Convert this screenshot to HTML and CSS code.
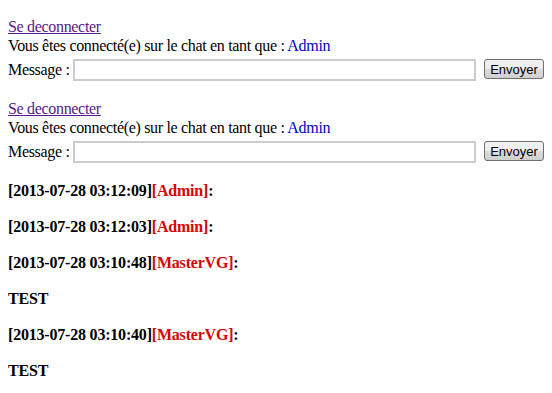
FILE: index.html
```html
<!DOCTYPE html>
<html lang="fr">
<head>
  <meta charset="UTF-8" />
  <title>Chat</title>
  <link rel="stylesheet" href="styles.css">
</head>
<body>

  <div class="session">
    <a href="#" class="logout">Se deconnecter</a>
    <div class="line">Vous êtes connecté(e) sur le chat en tant que : <span class="user">Admin</span></div>
    <form class="send" onsubmit="return false;">
      <label for="msg1">Message :</label>
      <input type="text" id="msg1" class="field">
      <button type="submit" class="btn">Envoyer</button>
    </form>
  </div>

  <div class="session">
    <a href="#" class="logout">Se deconnecter</a>
    <div class="line">Vous êtes connecté(e) sur le chat en tant que : <span class="user">Admin</span></div>
    <form class="send" onsubmit="return false;">
      <label for="msg2">Message :</label>
      <input type="text" id="msg2" class="field">
      <button type="submit" class="btn">Envoyer</button>
    </form>
  </div>

  <div class="messages">
    <p class="msg">[2013-07-28 03:12:09]<span class="nick">[Admin]</span>:</p>
    <p class="msg">[2013-07-28 03:12:03]<span class="nick">[Admin]</span>:</p>
    <p class="msg">[2013-07-28 03:10:48]<span class="nick">[MasterVG]</span>:</p>
    <p class="msg">TEST</p>
    <p class="msg">[2013-07-28 03:10:40]<span class="nick">[MasterVG]</span>:</p>
    <p class="msg">TEST</p>
  </div>

</body>
</html>
```

FILE: styles.css
```css
body {
  margin: 8px;
  padding-top: 9px;
  font-family: "Liberation Serif", "Times New Roman", serif;
  font-size: 16px;
  line-height: 19px;
  letter-spacing: -0.32px;
  color: #000;
  background: #fff;
}
.session {
  margin-bottom: 18px;
}
.logout {
  display: block;
  width: max-content;
  color: #551a8b;
  text-decoration: underline;
}
.line {
  display: block;
}
.user {
  color: #0000cc;
}
.send {
  display: flex;
  align-items: flex-start;
  margin: 0;
  padding-top: 4px;
}
.send label {
  flex: none;
  box-sizing: border-box;
  width: 65px;
  white-space: nowrap;
  margin-top: 1px;
}
.field {
  flex: none;
  box-sizing: border-box;
  width: 403px;
  height: 22px;
  margin: 0;
  padding: 1px 3px;
  border: 2px solid #cccccc;
  background: #fff;
  font-size: 13px;
}
.btn {
  flex: none;
  box-sizing: border-box;
  width: 60px;
  height: 20px;
  margin: 0 0 0 8px;
  padding: 0;
  font-family: "Liberation Sans", Arial, sans-serif;
  font-size: 13px;
  letter-spacing: 0;
  color: #000;
  border: 1px solid #707070;
  border-radius: 3px;
  background: linear-gradient(#f2f2f2, #ebebeb 50%, #dddddd 51%, #cfcfcf);
}
.messages {
  margin-top: 18px;
}
.msg {
  margin: 0 0 16px;
  line-height: 20px;
  font-weight: bold;
  letter-spacing: -0.2px;
}
.nick {
  color: #e00000;
}
```
